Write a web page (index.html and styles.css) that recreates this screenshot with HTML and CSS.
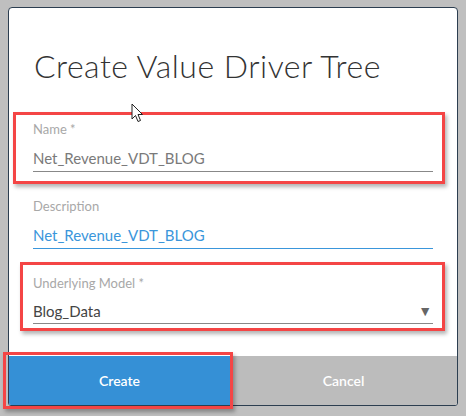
FILE: index.html
```html
<!DOCTYPE html>
<html lang="en">
<head>
    <meta charset="UTF-8">
    <title>Create Value Driver Tree</title>
    <link rel="stylesheet" href="styles.css">
</head>
<body>
    <div class="dialog">
        <h1 class="title">Create Value Driver Tree</h1>
        <div class="fields">
            <div class="field">
                <label>Name *</label>
                <div class="value">Net_Revenue_VDT_BLOG</div>
            </div>
            <div class="field active">
                <label>Description</label>
                <div class="value">Net_Revenue_VDT_BLOG</div>
            </div>
            <div class="field select">
                <label>Underlying Model *</label>
                <div class="value">Blog_Data<span class="arrow">&#9660;</span></div>
            </div>
        </div>
        <div class="footer">
            <div class="btn create">Create</div>
            <div class="btn cancel">Cancel</div>
        </div>
    </div>

    <!-- annotation boxes drawn over the screenshot -->
    <div class="mark mark-name"></div>
    <div class="mark mark-model"></div>
    <div class="mark mark-create"></div>

    <svg class="cursor" width="13" height="20" viewBox="0 0 13 20">
        <path d="M1 1 L1 16 L4.5 12.5 L7 18.5 L9.5 17.5 L7 11.5 L11.5 11.5 Z" fill="#fff" stroke="#222" stroke-width="1" stroke-linejoin="round"/>
    </svg>
</body>
</html>
```

FILE: styles.css
```css
*{
    margin: 0;
    padding: 0;
    box-sizing: border-box;
}
body{
    background-color: #bfbfbf;
    font-family: 'Lato', 'Open Sans', sans-serif;
    padding: 7px 0 0 8px;
    width: 466px;
    height: 416px;
    overflow: hidden;
    position: relative;
}
.dialog{
    width: 450px;
    height: 399px;
    border: 1px solid #2c3e50;
    border-radius: 4px 4px 3px 3px;
    background: #fff;
    display: flex;
    flex-direction: column;
    overflow: hidden;
}
.title{
    font-weight: 300;
    font-size: 32px;
    line-height: 40px;
    color: #333;
    padding: 38px 0 0 25px;
    letter-spacing: 0.5px;
}
.fields{
    padding: 35px 24px 0 24px;
    display: flex;
    flex-direction: column;
    gap: 26px;
}
.field label{
    display: block;
    font-size: 13px;
    line-height: 16px;
    color: #a8a8a8;
}
.field .value{
    margin-top: 8px;
    height: 27px;
    font-size: 15px;
    line-height: 26px;
    color: #7a7a7a;
    border-bottom: 1px solid #888;
    display: flex;
    justify-content: space-between;
}
.field.active .value{
    color: #3a96db;
    border-bottom-color: #3a96db;
}
.field.select .value{
    color: #444;
    margin-top: 7px;
    height: 26px;
}
.field .arrow{
    font-size: 14px;
    color: #666;
    padding-right: 1px;
}
.footer{
    margin-top: auto;
    height: 49px;
    display: flex;
    background: #bcbcbc;
}
.btn{
    flex: 1;
    display: flex;
    justify-content: center;
    align-items: center;
    color: #fff;
    font-size: 14px;
    font-weight: 600;
}
.btn.create{
    background: #3590d6;
    flex: 0 0 221px;
}
.mark{
    position: absolute;
    border: 3px solid #f44545;
    box-shadow: 2px 3px 4px rgba(0,0,0,0.3);
}
.mark-name{
    left: 13px;
    top: 112px;
    width: 432px;
    height: 72px;
}
.mark-model{
    left: 20px;
    top: 262px;
    width: 425px;
    height: 69px;
}
.mark-create{
    left: 3px;
    top: 352px;
    width: 230px;
    height: 57px;
}
.cursor{
    position: absolute;
    left: 131px;
    top: 103px;
}
```
